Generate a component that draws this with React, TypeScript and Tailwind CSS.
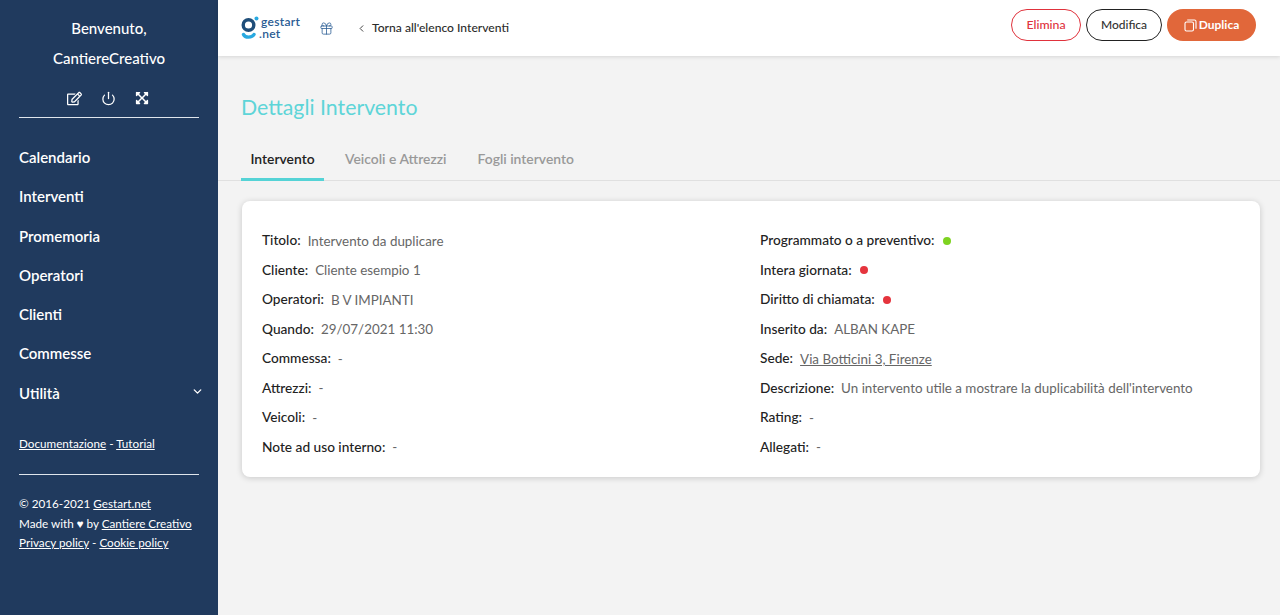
import { ChevronDown, ChevronLeft, Gift, Power } from 'lucide-react'
import { FaExpandArrowsAlt, FaRegEdit } from 'react-icons/fa'

const menu = ['Calendario', 'Interventi', 'Promemoria', 'Operatori', 'Clienti', 'Commesse']

type Field = { label: string; value?: string; dot?: 'green' | 'red'; link?: boolean }

const leftFields: Field[] = [
  { label: 'Titolo:', value: 'Intervento da duplicare' },
  { label: 'Cliente:', value: 'Cliente esempio 1' },
  { label: 'Operatori:', value: 'B V IMPIANTI' },
  { label: 'Quando:', value: '29/07/2021 11:30' },
  { label: 'Commessa:', value: '-' },
  { label: 'Attrezzi:', value: '-' },
  { label: 'Veicoli:', value: '-' },
  { label: 'Note ad uso interno:', value: '-' }
]

const rightFields: Field[] = [
  { label: 'Programmato o a preventivo:', dot: 'green' },
  { label: 'Intera giornata:', dot: 'red' },
  { label: 'Diritto di chiamata:', dot: 'red' },
  { label: 'Inserito da:', value: 'ALBAN KAPE' },
  { label: 'Sede:', value: 'Via Botticini 3, Firenze', link: true },
  { label: 'Descrizione:', value: "Un intervento utile a mostrare la duplicabilità dell'intervento" },
  { label: 'Rating:', value: '-' },
  { label: 'Allegati:', value: '-' }
]

const LogoMark = () => (
  <svg width="18" height="24" viewBox="0 0 18 24" fill="none" className="shrink-0">
    <circle cx="7.500" cy="9" r="5.300" stroke="#1f4e79" strokeWidth="3.400" />
    <circle cx="15.500" cy="2.500" r="2" fill="#29a9e0" />
    <path d="M2.500 18.500c1.500 3.500 8.500 3.500 10.500 0" stroke="#29a9e0" strokeWidth="3.400" strokeLinecap="round" />
  </svg>
)

// front sheet sits low-left, the back one peeks out top and right
const DuplicateIcon = () => (
  <svg width="13" height="13" viewBox="0 0 13 13" fill="none" stroke="white" strokeWidth="1.100">
    <rect x="1" y="3" width="8.500" height="9" rx="1.500" />
    <path d="M3.200 1h7.300A1.500 1.500 0 0 1 12 2.500v7.300" />
  </svg>
)

const Sidebar = () => (
  <aside className="w-[218px] shrink-0 bg-[#203a5e] text-white flex flex-col">
    <div className="pt-[13px] text-center text-[15px] leading-[30px] font-medium">
      <div>Benvenuto,</div>
      <div>CantiereCreativo</div>
    </div>
    <div className="mx-[19px] mt-[9px] h-[36px] border-b border-[#dfe5ec] flex items-start justify-center gap-[19px] pt-[9px] pr-[3px]">
      <FaRegEdit size={15} />
      <Power size={15} strokeWidth={2} />
      <FaExpandArrowsAlt size={14} />
    </div>
    <nav className="mt-[20px] pl-[19px] pr-[14px] text-[15px] font-semibold">
      {menu.map((m) => (
        <div key={m} className="h-[39.300px] leading-[38.500px]">
          {m}
        </div>
      ))}
      <div className="h-[39.300px] leading-[38.500px] flex items-center justify-between">
        <span>Utilità</span>
        <ChevronDown size={13} strokeWidth={2.500} className="-mt-1" />
      </div>
    </nav>
    <div className="mt-[20px] mx-[19px] text-[11.700px] leading-[20px] pb-[21px] border-b border-[#dfe5ec]">
      <span className="underline">Documentazione</span> - <span className="underline">Tutorial</span>
    </div>
    <div className="mt-[19px] mx-[19px] text-[11.700px] leading-[19.500px]">
      <div>
        © 2016-2021 <span className="underline">Gestart.net</span>
      </div>
      <div>
        Made with ♥ by <span className="underline">Cantiere Creativo</span>
      </div>
      <div>
        <span className="underline">Privacy policy</span> - <span className="underline">Cookie policy</span>
      </div>
    </div>
  </aside>
)

const Header = () => (
  <header className="h-[56px] shrink-0 bg-white shadow-[0_1px_4px_rgba(0,0,0,0.12)] flex items-center pl-[23px] pr-[24px]">
    <LogoMark />
    <div className="ml-[2px] w-[40px] text-[12px] leading-[12px] font-semibold text-[#2a5c94] tracking-wide">
      <div>gestart</div>
      <div className="-ml-[2px]">.net</div>
    </div>
    <Gift size={15} strokeWidth={1.250} className="ml-[18px] text-[#2a5c94]" />
    <ChevronLeft size={11} strokeWidth={2} className="ml-[22px] text-[#333]" />
    <span className="ml-[5px] text-[12.100px] font-medium text-[#2b2b2b]">Torna all'elenco Interventi</span>
    <div className="ml-auto -mt-[6px] flex items-center gap-[5px] text-[12px] font-medium">
      <button className="h-[32px] w-[70px] rounded-full border-[1.500px] border-[#e0323c] text-[#e0323c] text-[12.300px]">
        Elimina
      </button>
      <button className="h-[32px] w-[76px] rounded-full border-[1.500px] border-[#222] text-[#333]">Modifica</button>
      <button className="h-[32px] w-[89px] rounded-full bg-[#e1673a] text-white font-bold flex items-center justify-center gap-[2px]">
        <DuplicateIcon />
        Duplica
      </button>
    </div>
  </header>
)

const Row = ({ field }: { field: Field }) => (
  <div className="h-[29.500px] flex items-center text-[13.400px] whitespace-nowrap">
    <span className="font-medium text-[#222] text-[13.700px]">{field.label}</span>
    {field.value ? (
      <span className={`ml-[7px] text-[#666] ${field.link ? 'underline' : ''}`}>{field.value}</span>
    ) : null}
    {field.dot ? (
      <span className={`ml-[8px] size-[8px] rounded-full ${field.dot === 'green' ? 'bg-[#7ed321]' : 'bg-[#e5343d]'}`} />
    ) : null}
  </div>
)

export default function App() {
  return (
    <div className="flex h-[615px] w-[1280px] overflow-hidden bg-[#f3f3f3] font-['Lato','Noto_Sans',sans-serif]">
      <Sidebar />
      <div className="flex-1 flex flex-col">
        <Header />
        <h1 className="mt-[36px] ml-[23px] text-[21.300px] leading-[30px] text-[#5ed5d8]">Dettagli Intervento</h1>
        <div className="mt-[22px] h-[37px] border-b border-[#e0e0e0] pl-[23px] flex text-[13.900px] font-semibold text-[#999]">
          <div className="w-[83px] h-[37px] border-b-[3px] border-[#55d3d6] text-center leading-[30px] text-[#222]">
            Intervento
          </div>
          <div className="ml-[21px] leading-[30px]">Veicoli e Attrezzi</div>
          <div className="ml-[31px] leading-[30px]">Fogli intervento</div>
        </div>
        <div className="mt-[20px] mx-[20px] ml-[24px] h-[276px] rounded-lg bg-white shadow-[0_1px_6px_rgba(0,0,0,0.18)] pt-[25px] pl-[20px] grid grid-cols-[498px_1fr]">
          <div>
            {leftFields.map((f) => (
              <Row key={f.label} field={f} />
            ))}
          </div>
          <div>
            {rightFields.map((f) => (
              <Row key={f.label} field={f} />
            ))}
          </div>
        </div>
      </div>
    </div>
  )
}
